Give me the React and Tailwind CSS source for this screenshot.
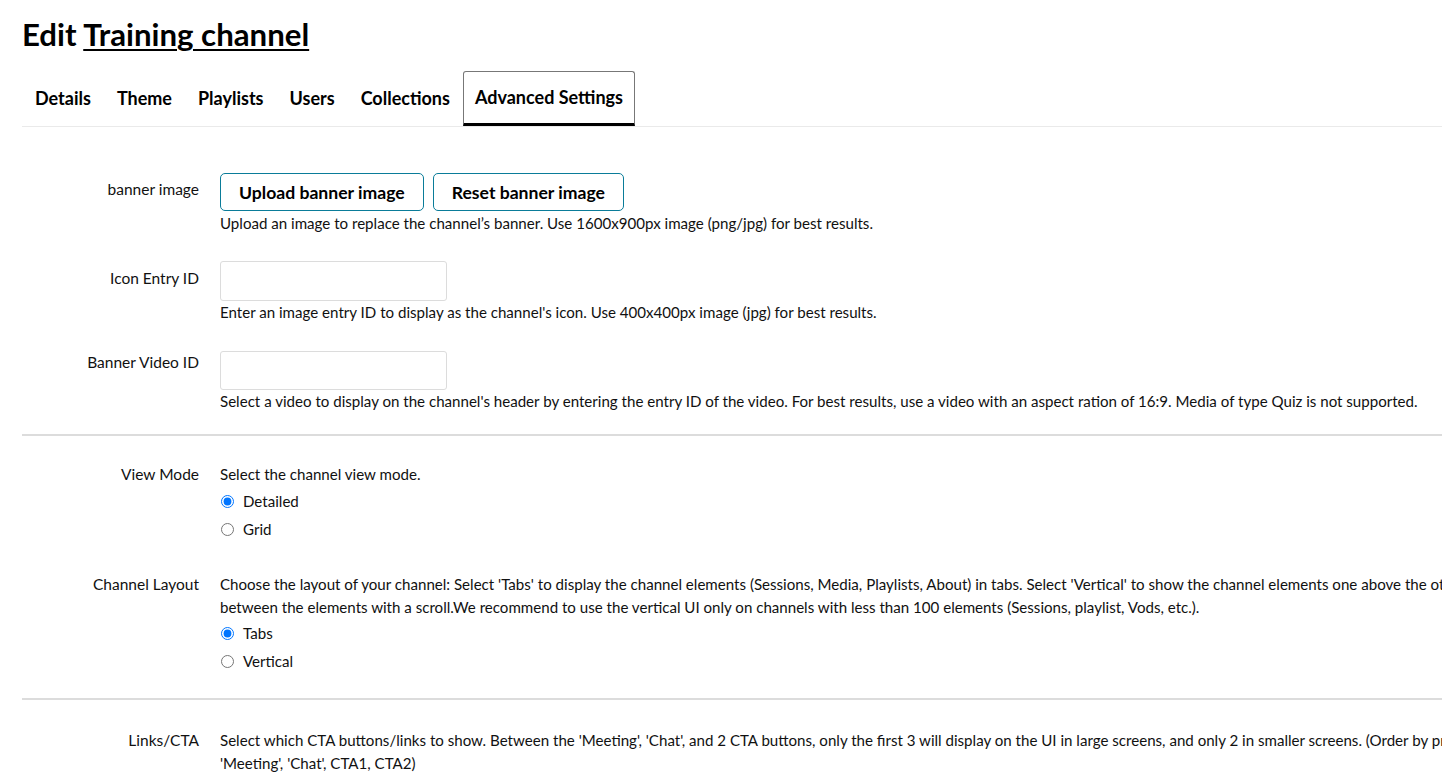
import { useState } from "react";

const tabs = ["Details", "Theme", "Playlists", "Users", "Collections", "Advanced Settings"];

function Row({ label, children, labelClass = "" }) {
  return (
    <div className="flex">
      <div className={`w-[177px] shrink-0 text-right text-[15.5px] leading-[23px] ${labelClass}`}>{label}</div>
      <div className="pl-[21px] flex-1 text-[15.1px] leading-[23px]">{children}</div>
    </div>
  );
}

function Radio({ name, label, checked }) {
  return (
    <label className="flex items-center gap-[9px] h-[28px]">
      <input type="radio" name={name} defaultChecked={checked} className="m-0 ml-[1px] w-[13px] h-[13px] accent-[#0075ff]" />
      <span>{label}</span>
    </label>
  );
}

export default function App() {
  const [active, setActive] = useState("Advanced Settings");

  return (
    <div className="w-[1442px] h-[777px] overflow-hidden bg-white text-[#111]" style={{ fontFamily: "Lato, 'Open Sans', sans-serif" }}>
      <div className="w-[1700px] pl-[22px]">
        <h1 className="text-[31.2px] font-bold leading-[36px] pt-[16px] text-black">
          Edit <span className="underline decoration-2 underline-offset-[3px]">Training channel</span>
        </h1>

        {/* tabs */}
        <div className="flex mt-[19px] border-b border-[#eaeaea]">
          {tabs.map((t) => (
            <button
              key={t}
              onClick={() => setActive(t)}
              className={`h-[55px] text-[18px] font-bold text-black ${
                active === t
                  ? "border border-[#777] border-b-[3px] border-b-black rounded-t-[3px] -mb-px px-[11px]"
                  : "px-[13px]"
              }`}
            >
              {t}
            </button>
          ))}
        </div>

        <div className="pt-[46px]">
          <Row label="banner image" labelClass="pt-[5px]">
            <div className="flex gap-[9px]">
              <button className="h-[38px] px-[18px] border border-[#0a7c99] rounded-[5px] text-[17.6px] font-bold text-black">
                Upload banner image
              </button>
              <button className="h-[38px] px-[18px] border border-[#0a7c99] rounded-[5px] text-[17.6px] font-bold text-black">
                Reset banner image
              </button>
            </div>
            <p className="mt-[1px]">Upload an image to replace the channel’s banner. Use 1600x900px image (png/jpg) for best results.</p>
          </Row>

          <div className="h-[26px]" />
          <Row label="Icon Entry ID" labelClass="pt-[6px]">
            <input className="block w-[227px] h-[40px] border border-[#dcdcdc] rounded-[3px] outline-none" />
            <p>Enter an image entry ID to display as the channel's icon. Use 400x400px image (jpg) for best results.</p>
          </Row>

          <div className="h-[27px]" />
          <Row label="Banner Video ID" labelClass="pt-0">
            <input className="block w-[227px] h-[39px] border border-[#dcdcdc] rounded-[3px] outline-none" />
            <p>Select a video to display on the channel's header by entering the entry ID of the video. For best results, use a video with an aspect ration of 16:9. Media of type Quiz is not supported.</p>
          </Row>

          <div className="border-t-2 border-[#dcdcdc] mt-[21px] mb-[27px]" />

          <Row label="View Mode">
            <p>Select the channel view mode.</p>
            <div className="mt-[1px]">
              <Radio name="view" label="Detailed" checked />
              <Radio name="view" label="Grid" />
            </div>
          </Row>

          <div className="h-[30px]" />
          <Row label="Channel Layout">
            <p className="whitespace-nowrap">
              Choose the layout of your channel: Select 'Tabs' to display the channel elements (Sessions, Media, Playlists, About) in tabs. Select 'Vertical' to show the channel elements one above the other and navigate
              <br />
              between the elements with a scroll.We recommend to use the vertical UI only on channels with less than 100 elements (Sessions, playlist, Vods, etc.).
            </p>
            <div>
              <Radio name="layout" label="Tabs" checked />
              <Radio name="layout" label="Vertical" />
            </div>
          </Row>

          <div className="border-t-2 border-[#dcdcdc] mt-[23px] mb-[29px]" />

          <Row label="Links/CTA">
            <p className="whitespace-nowrap">
              Select which CTA buttons/links to show. Between the 'Meeting', 'Chat', and 2 CTA buttons, only the first 3 will display on the UI in large screens, and only 2 in smaller screens. (Order by priority:
              <br />
              'Meeting', 'Chat', CTA1, CTA2)
            </p>
          </Row>
        </div>
      </div>
    </div>
  );
}
